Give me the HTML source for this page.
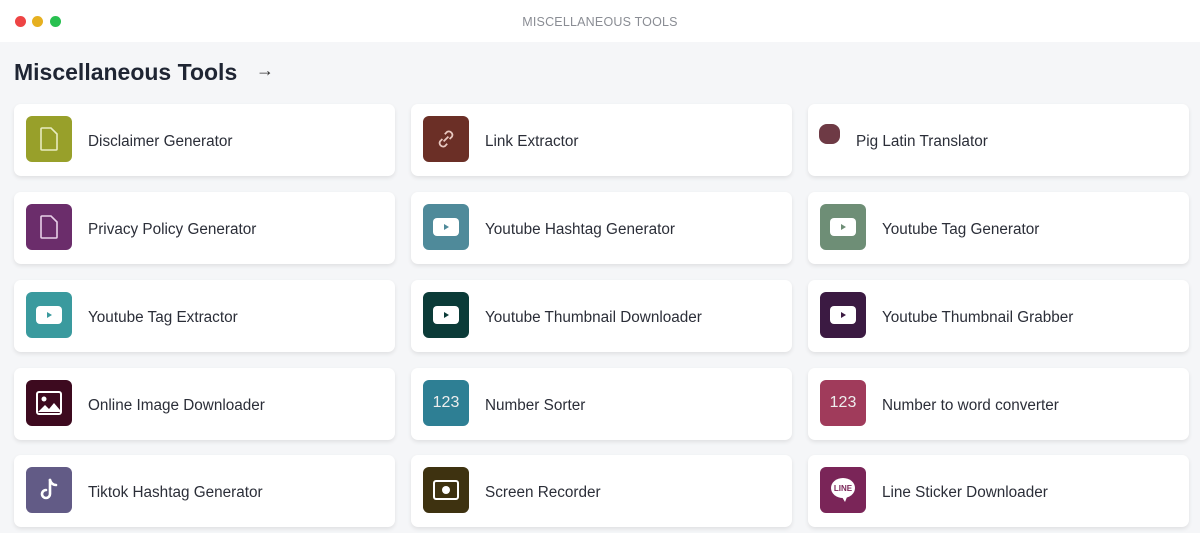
<!DOCTYPE html>
<html><head><meta charset="utf-8"><style>
*{box-sizing:border-box;margin:0;padding:0}
body{width:1200px;height:533px;overflow:hidden;background:#f5f6f8;font-family:"Liberation Sans",sans-serif;position:relative}
.bar{position:absolute;left:0;top:0;width:1200px;height:42px;background:#fff}
.dot{position:absolute;top:16px;width:11px;height:11px;border-radius:50%}
.bt{position:absolute;top:15px;width:1200px;text-align:center;font-size:12.5px;color:#8a8d94;letter-spacing:.2px}
h1{position:absolute;left:14px;top:59px;font-size:23px;font-weight:bold;color:#1f2533}
.arr{position:absolute;left:256px;top:60px;font-size:18px;color:#333}
.card{position:absolute;width:381px;height:72px;background:#fff;border-radius:7px;box-shadow:0 2px 4px rgba(0,0,0,.09)}
.ic{position:absolute;left:12px;top:12px;width:46px;height:46px;border-radius:6px;display:flex;align-items:center;justify-content:center;color:#fff}
.t{position:absolute;left:74px;top:29px;font-size:15.3px;color:#2b2e38}
.num{font-size:16px;color:#eee}
</style></head><body>
<div class="bar"></div>
<div class="dot" style="left:15px;background:#ee4444"></div>
<div class="dot" style="left:32px;background:#e6b020"></div>
<div class="dot" style="left:50px;background:#28c050"></div>
<div class="bt">MISCELLANEOUS TOOLS</div>
<h1>Miscellaneous Tools</h1><div class="arr">→</div>

<div class="card" style="left:14px;top:104px"><div class="ic" style="background:#98a02a"><svg width="22" height="26" viewBox="0 0 22 26"><path d="M4 2h9l6 6v15a1 1 0 0 1-1 1H4a1 1 0 0 1-1-1V3a1 1 0 0 1 1-1z" fill="none" stroke="#e8ecc0" stroke-width="1.6"/></svg></div><div class="t">Disclaimer Generator</div></div>
<div class="card" style="left:411px;top:104px"><div class="ic" style="background:#6b2f26"><svg width="24" height="24" viewBox="0 0 20 20" fill="none" stroke="#e8c8c0" stroke-width="1.5"><path d="M8 12l4-4"/><path d="M9 6l2-2a3 3 0 0 1 4 4l-2 2"/><path d="M11 14l-2 2a3 3 0 0 1-4-4l2-2"/></svg></div><div class="t">Link Extractor</div></div>
<div class="card" style="left:808px;top:104px"><div style="position:absolute;left:11px;top:20px;width:21px;height:20px;border-radius:8px;background:#6e3a45"></div><div class="t" style="left:48px">Pig Latin Translator</div></div>

<div class="card" style="left:14px;top:192px"><div class="ic" style="background:#6b2d6b"><svg width="22" height="26" viewBox="0 0 22 26"><path d="M4 2h9l6 6v15a1 1 0 0 1-1 1H4a1 1 0 0 1-1-1V3a1 1 0 0 1 1-1z" fill="none" stroke="#e8d0e8" stroke-width="1.6"/></svg></div><div class="t">Privacy Policy Generator</div></div>
<div class="card" style="left:411px;top:192px"><div class="ic" style="background:#4f8a9a"><svg width="26" height="18" viewBox="0 0 26 18"><rect x="0" y="0" width="26" height="18" rx="4" fill="#fff"/><path d="M11 6l5 3-5 3z" fill="#4f8a9a"/></svg></div><div class="t">Youtube Hashtag Generator</div></div>
<div class="card" style="left:808px;top:192px"><div class="ic" style="background:#6e8e76"><svg width="26" height="18" viewBox="0 0 26 18"><rect x="0" y="0" width="26" height="18" rx="4" fill="#fff"/><path d="M11 6l5 3-5 3z" fill="#6e8e76"/></svg></div><div class="t">Youtube Tag Generator</div></div>

<div class="card" style="left:14px;top:280px"><div class="ic" style="background:#3a9a9e"><svg width="26" height="18" viewBox="0 0 26 18"><rect x="0" y="0" width="26" height="18" rx="4" fill="#fff"/><path d="M11 6l5 3-5 3z" fill="#3a9a9e"/></svg></div><div class="t">Youtube Tag Extractor</div></div>
<div class="card" style="left:411px;top:280px"><div class="ic" style="background:#0b3b38"><svg width="26" height="18" viewBox="0 0 26 18"><rect x="0" y="0" width="26" height="18" rx="4" fill="#fff"/><path d="M11 6l5 3-5 3z" fill="#0b3b38"/></svg></div><div class="t">Youtube Thumbnail Downloader</div></div>
<div class="card" style="left:808px;top:280px"><div class="ic" style="background:#3b1a42"><svg width="26" height="18" viewBox="0 0 26 18"><rect x="0" y="0" width="26" height="18" rx="4" fill="#fff"/><path d="M11 6l5 3-5 3z" fill="#3b1a42"/></svg></div><div class="t">Youtube Thumbnail Grabber</div></div>

<div class="card" style="left:14px;top:368px"><div class="ic" style="background:#3d0a1f"><svg width="26" height="24" viewBox="0 0 26 24"><rect x="1" y="1" width="24" height="22" rx="2" fill="none" stroke="#fff" stroke-width="2"/><circle cx="8" cy="8" r="2.5" fill="#fff"/><path d="M2 21l7-7 4 4 5-6 6 7v2H2z" fill="#fff"/></svg></div><div class="t">Online Image Downloader</div></div>
<div class="card" style="left:411px;top:368px"><div class="ic num" style="background:#2e7f94">123</div><div class="t">Number Sorter</div></div>
<div class="card" style="left:808px;top:368px"><div class="ic num" style="background:#a03b5b">123</div><div class="t">Number to word converter</div></div>

<div class="card" style="left:14px;top:455px"><div class="ic" style="background:#625b86"><svg width="20" height="24" viewBox="0 0 20 24" fill="none" stroke="#fff" stroke-width="2.6" stroke-linecap="round"><path d="M11 2v14a4 4 0 1 1-4-4"/><path d="M11 2c1 3 3 5 6 5"/></svg></div><div class="t">Tiktok Hashtag Generator</div></div>
<div class="card" style="left:411px;top:455px"><div class="ic" style="background:#3e3210"><svg width="26" height="20" viewBox="0 0 26 20"><rect x="1" y="1" width="24" height="18" rx="2" fill="none" stroke="#fff" stroke-width="2"/><circle cx="13" cy="10" r="4" fill="#fff"/></svg></div><div class="t">Screen Recorder</div></div>
<div class="card" style="left:808px;top:455px"><div class="ic" style="background:#7a2558"><svg width="26" height="26" viewBox="0 0 26 26"><ellipse cx="13" cy="11" rx="12" ry="10" fill="#fff"/><path d="M12 20l3 5 2-5z" fill="#fff"/><text x="13" y="14" text-anchor="middle" font-family="Liberation Sans" font-size="8" font-weight="bold" fill="#7a2558">LINE</text></svg></div><div class="t">Line Sticker Downloader</div></div>
</body></html>
